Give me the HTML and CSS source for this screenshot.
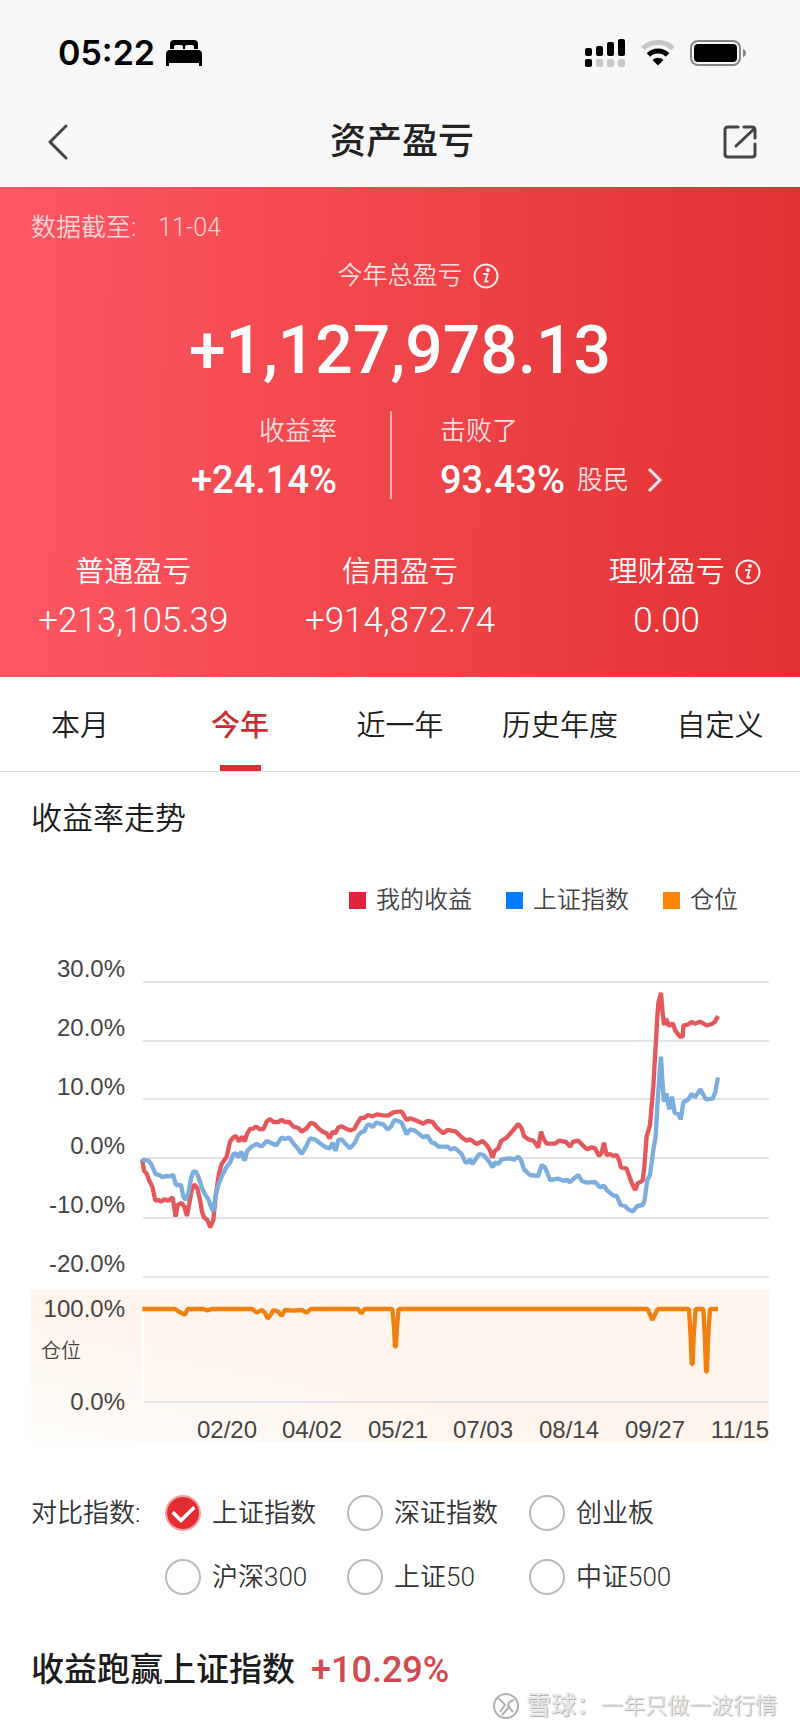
FILE: index.html
```html
<!DOCTYPE html>
<html lang="zh-CN">
<head>
    <meta charset="UTF-8">
    <meta name="viewport" content="width=device-width, initial-scale=1">
    <title>资产盈亏</title>
    <link rel="stylesheet" href="styles.css">
</head>
<body>
    <header class="top">
        <div class="status-bar">
            <div class="status-left">
                <span class="time">05:22</span>
                <svg width="36" height="26" viewBox="0 0 36 26">
                    <path d="M4 9V4q0-4 4-4h20q4 0 4 4v5h-4V7q0-2-2-2h-5q-2 0-2 2v2h-2V7q0-2-2-2h-5q-2 0-2 2v2z"/>
                    <path d="M0 26V14q0-4 4-4h28q4 0 4 4v12h-3v-3H3v3z"/>
                </svg>
            </div>
            <div class="status-right">
                <svg width="41" height="28" viewBox="0 0 41 28">
                    <rect x="0" y="9" width="7" height="8" rx="2"/>
                    <rect x="11" y="7" width="7" height="10" rx="2"/>
                    <rect x="22" y="3" width="7" height="14" rx="2"/>
                    <rect x="33" y="0" width="7" height="17" rx="2"/>
                    <rect x="0" y="20" width="7" height="8" rx="2"/>
                    <g fill="#c6c6c6">
                        <rect x="11" y="20" width="7" height="8" rx="2"/>
                        <rect x="22" y="20" width="7" height="8" rx="2"/>
                        <rect x="33" y="20" width="7" height="8" rx="2"/>
                    </g>
                </svg>
                <svg width="34" height="26" viewBox="0 0 34 26">
                    <path d="M2 8.500a21.500 21.500 0 0 1 30 0" fill="none" stroke="#c6c6c6" stroke-width="5"/>
                    <path d="M7.500 15a13.500 13.500 0 0 1 19 0" fill="none" stroke="#000" stroke-width="5"/>
                    <path d="M11.500 20a8 8 0 0 1 11 0L17 25.500z"/>
                </svg>
                <svg width="56" height="26" viewBox="0 0 56 26">
                    <rect x="1" y="1" width="49" height="24" rx="7" fill="none" stroke="#868686" stroke-width="2"/>
                    <rect x="4" y="4" width="43" height="18" rx="4"/>
                    <path d="M53 9q3 1 3 4t-3 4z" fill="#868686"/>
                </svg>
            </div>
        </div>
        <div class="nav">
            <button type="button" class="icon-btn" aria-label="返回">
                <svg width="22" height="36" viewBox="0 0 22 36"><path d="M19 2L3 18l16 16"/></svg>
            </button>
            <h1>资产盈亏</h1>
            <button type="button" class="icon-btn" aria-label="分享">
                <svg width="34" height="34" viewBox="0 0 34 34">
                    <path d="M15 2H5Q2 2 2 5v24q0 3 3 3h24q3 0 3-3V19M21 2h8q3 0 3 3v8M13 21L31 4"/>
                </svg>
            </button>
        </div>
    </header>

    <section class="hero">
        <div class="date"><span>数据截至:</span><span>11-04</span></div>
        <div class="total-label">
            今年总盈亏
            <svg class="info" viewBox="0 0 26 26">
                <circle cx="13" cy="13" r="11.500"/>
                <path d="M10 11h4.500l-2.200 7.500h3.200"/>
                <circle class="dot" cx="15" cy="7" r="2"/>
            </svg>
        </div>
        <div class="total">+1,127,978.13</div>
        <div class="metrics">
            <div class="metric rate">
                <span class="label">收益率</span>
                <strong>+24.14%</strong>
            </div>
            <a href="#" class="metric rank">
                <span class="label">击败了</span>
                <span class="rank-value">
                    <strong>93.43%</strong>
                    <span>股民</span>
                    <svg width="16" height="26" viewBox="0 0 16 26"><path d="M2 2l11 11L2 24"/></svg>
                </span>
            </a>
        </div>
        <div class="accounts">
            <div class="account"><span>普通盈亏</span><b>+213,105.39</b></div>
            <div class="account"><span>信用盈亏</span><b>+914,872.74</b></div>
            <div class="account">
                <span class="with-info">
                    理财盈亏
                    <svg class="info" viewBox="0 0 26 26">
                        <circle cx="13" cy="13" r="11.500"/>
                        <path d="M10 11h4.500l-2.200 7.500h3.200"/>
                        <circle class="dot" cx="15" cy="7" r="2"/>
                    </svg>
                </span>
                <b>0.00</b>
            </div>
        </div>
    </section>

    <nav class="tabs">
        <button type="button">本月</button>
        <button type="button" class="active">今年</button>
        <button type="button">近一年</button>
        <button type="button">历史年度</button>
        <button type="button">自定义</button>
    </nav>

    <main>
        <h2>收益率走势</h2>
        <ul class="legend">
            <li class="mine">我的收益</li>
            <li class="index">上证指数</li>
            <li class="position">仓位</li>
        </ul>

        <svg class="chart" viewBox="0 0 738 494" role="img" aria-label="收益率走势">
            <defs>
                <linearGradient id="band" x1="0" y1="1" x2="1" y2="0">
                    <stop offset="0" stop-color="#fffdfb"/>
                    <stop offset=".4" stop-color="#fff5ec"/>
                </linearGradient>
            </defs>
            <rect y="339" width="738" height="153" fill="url(#band)"/>
            <path class="grid" d="M112 32h626M112 91h626M112 149h626M112 208h626M112 268h626M112 327h626M112 452h626"/>
            <path d="M112 358v94" stroke="#fff" stroke-width="3"/>
            <g class="y-axis">
                <text x="94" y="27">30.0%</text>
                <text x="94" y="86">20.0%</text>
                <text x="94" y="145">10.0%</text>
                <text x="94" y="204">0.0%</text>
                <text x="94" y="263">-10.0%</text>
                <text x="94" y="322">-20.0%</text>
                <text x="94" y="367">100.0%</text>
                <text x="94" y="460">0.0%</text>
            </g>
            <text class="small" x="10" y="408">仓位</text>
            <g class="x-axis">
                <text x="196" y="488">02/20</text>
                <text x="281" y="488">04/02</text>
                <text x="367" y="488">05/21</text>
                <text x="452" y="488">07/03</text>
                <text x="538" y="488">08/14</text>
                <text x="624" y="488">09/27</text>
                <text x="709" y="488">11/15</text>
            </g>
            <!-- series points are in thirds of a unit -->
            <g class="series" transform="translate(-31 -90) scale(.33333)">
                <polyline stroke="#e4585c" points="427,900 432,932 440,941 448,962 457,980 466,1022 475,1020 484,1025 493,1018 505,1022 518,1012 527,1070 533,1035 545,1029 552,1038 561,1068 568,1030 575,990 583,973 592,985 600,1020 606,1055 612,1072 622,1080 631,1102 640,1080 648,1000 657,940 665,912 680,890 690,845 700,832 708,828 717,844 726,830 734,844 742,820 750,807 760,806 768,799 778,807 790,808 800,785 810,777 820,786 835,786 845,779 855,786 868,786 880,800 895,804 905,815 920,805 932,788 945,793 955,805 968,815 980,820 989,835 998,815 1006,820 1015,802 1025,799 1038,806 1050,811 1063,807 1072,790 1082,774 1092,774 1104,765 1118,769 1130,763 1150,766 1165,767 1180,757 1195,755 1205,755 1220,780 1230,775 1245,780 1270,791 1282,783 1298,786 1310,803 1330,820 1343,810 1368,815 1385,832 1400,842 1410,838 1430,852 1448,843 1460,855 1470,870 1477,893 1485,872 1495,865 1503,843 1520,833 1540,810 1555,792 1565,805 1572,828 1585,838 1600,842 1615,862 1623,815 1630,835 1640,851 1665,851 1677,842 1698,846 1710,860 1720,845 1735,842 1750,858 1762,868 1775,862 1785,865 1797,888 1805,878 1812,848 1820,886 1830,882 1840,888 1850,885 1857,900 1863,922 1880,926 1890,955 1900,980 1906,990 1913,970 1928,962 1933,920 1940,830 1950,795 1960,680 1972,470 1975,430 1983,398 1988,460 1992,495 1999,477 2007,498 2018,490 2026,512 2040,530 2048,530 2050,497 2065,493 2075,486 2085,491 2100,485 2120,496 2135,492 2145,485 2154,468"/>
                <polyline stroke="#7badde" points="427,895 430,900 445,902 455,915 467,943 478,945 487,952 497,948 512,949 519,944 528,975 543,975 550,1010 557,1020 565,1000 573,955 580,935 588,935 597,955 606,985 615,1003 625,1018 631,1035 640,1055 646,1010 655,975 667,945 680,920 690,908 700,882 708,880 714,892 724,875 734,902 742,872 755,860 770,852 785,860 800,843 815,850 828,856 838,843 845,832 855,837 868,833 880,850 893,865 905,882 918,860 930,835 945,838 960,850 978,862 990,865 998,848 1007,872 1015,840 1025,838 1035,850 1050,865 1065,848 1075,825 1085,815 1092,815 1102,795 1110,794 1118,802 1128,788 1150,793 1163,808 1173,800 1183,780 1195,783 1205,788 1220,823 1230,808 1245,812 1270,832 1282,827 1295,848 1305,850 1315,860 1343,860 1352,868 1365,864 1385,882 1395,905 1402,908 1410,898 1417,912 1430,893 1438,882 1450,885 1465,902 1478,922 1485,907 1495,912 1505,898 1530,895 1542,899 1555,890 1563,900 1572,928 1590,945 1615,948 1625,915 1635,922 1650,960 1675,956 1690,962 1702,960 1710,967 1720,957 1735,945 1745,962 1760,968 1785,966 1800,982 1812,977 1820,990 1840,1007 1850,1008 1862,1035 1875,1038 1885,1048 1898,1055 1912,1038 1928,1035 1933,1025 1942,960 1950,945 1960,870 1967,830 1972,740 1978,650 1983,590 1987,660 1992,725 1999,700 2008,748 2016,710 2024,758 2035,762 2042,778 2050,727 2065,718 2075,702 2085,712 2101,688 2118,718 2138,716 2146,695 2154,652"/>
            </g>
            <g class="series" transform="translate(-31 290) scale(.33333)">
                <polyline stroke="#f08010" points="427,207 525,207 540,217 555,224 563,207 610,207 622,211 635,207 757,207 770,218 785,210 795,218 803,236 812,225 820,210 835,215 845,228 855,210 880,212 905,210 920,218 932,207 1074,207 1084,220 1094,207 1177,207 1182,260 1185,320 1188,320 1191,260 1196,207 1943,207 1957,240 1973,207 2067,207 2072,290 2075,372 2078,372 2081,290 2087,207 2110,207 2115,300 2118,395 2121,395 2124,300 2130,207 2154,207"/>
            </g>
        </svg>

        <fieldset class="compare">
            <legend>对比指数:</legend>
            <div class="options">
                <label><input type="radio" name="index" checked>上证指数</label>
                <label><input type="radio" name="index">深证指数</label>
                <label><input type="radio" name="index">创业板</label>
                <label><input type="radio" name="index">沪深300</label>
                <label><input type="radio" name="index">上证50</label>
                <label><input type="radio" name="index">中证500</label>
            </div>
        </fieldset>

        <p class="summary">收益跑赢上证指数<span>+10.29%</span></p>
    </main>

    <footer class="watermark">
        <svg width="28" height="28" viewBox="0 0 28 28">
            <circle cx="14" cy="14" r="12"/>
            <path d="M6 6q5 4 7 7l-5 7M22 8q-6 1-6 6l5 6M10 23l8-9"/>
        </svg>
        <b>雪球：</b><span>一年只做一波行情</span>
    </footer>
</body>
</html>
```
FILE: styles.css
```css
* {
    box-sizing: border-box;
}

body {
    margin: 0;
    background: #fff;
    color: #1c1c1c;
    font-family: Roboto, "Noto Sans CJK SC", sans-serif;
}

button {
    border: 0;
    padding: 0;
    background: none;
    color: inherit;
    font: inherit;
}

svg {
    display: block;
    flex: none;
}

/* header */
.top {
    background: #f7f7f7;
    padding-bottom: 9px;
}

.status-bar {
    display: flex;
    justify-content: space-between;
    align-items: center;
    height: 106px;
    padding: 0 54px 0 58px;
}

.status-left,
.status-right {
    display: flex;
    align-items: center;
}

.status-left {
    gap: 11px;
}

.status-right {
    gap: 15px;
}

.time {
    font: 600 34px/40px Inter, sans-serif;
    color: #000;
}

.nav {
    display: flex;
    justify-content: space-between;
    align-items: center;
    height: 72px;
    padding: 0 43px 0 47px;
}

.nav h1 {
    margin: 0;
    font-size: 36px;
    line-height: 48px;
    font-weight: 500;
    color: #222;
}

.icon-btn {
    width: 34px;
}

.icon-btn path {
    fill: none;
    stroke: #444;
    stroke-width: 3;
    stroke-linecap: round;
    stroke-linejoin: round;
}

/* red panel */
.hero {
    padding: 26px 0 37px;
    background: linear-gradient(91deg, #ff5864, #f0464b 48%, #e13133);
    color: #fff;
}

.date {
    display: flex;
    gap: 22px;
    padding: 0 31px;
    font-size: 25px;
    line-height: 30px;
    font-weight: 350;
    color: #ffd3d6;
}

.total-label {
    display: flex;
    justify-content: center;
    align-items: center;
    gap: 10px;
    margin-top: 18px;
    font-size: 25px;
    line-height: 30px;
    font-weight: 350;
    color: #ffdcde;
}

.info {
    width: 26px;
    height: 26px;
    margin-right: -36px;
    fill: none;
    stroke: #ffe9ea;
    stroke-width: 2;
}

.info .dot {
    fill: #ffe9ea;
    stroke: none;
}

.total {
    margin: 20px 0;
    font-size: 66px;
    line-height: 80px;
    font-weight: 500;
    text-align: center;
}

.metrics {
    display: flex;
    height: 88px;
}

.metric {
    display: flex;
    flex-direction: column;
    gap: 15px;
    padding-top: 5px;
    color: inherit;
    text-decoration: none;
}

.metric .label {
    font-size: 26px;
    line-height: 30px;
    font-weight: 350;
    color: #ffdcde;
}

.metric strong {
    font-size: 38px;
    line-height: 38px;
    font-weight: 500;
}

.rate {
    width: 49%;
    align-items: flex-end;
    padding-right: 53px;
    border-right: 2px solid #f9b5b8;
}

.rank {
    flex: 1;
    padding-left: 48px;
}

.rank-value {
    display: flex;
    align-items: center;
    gap: 12px;
    font-size: 26px;
    line-height: 38px;
    font-weight: 350;
    color: #ffdcde;
}

.rank-value strong {
    color: #fff;
}

.rank-value svg {
    margin-left: 6px;
    fill: none;
    stroke: #ffe9ea;
    stroke-width: 3;
}

.accounts {
    display: grid;
    grid-template-columns: repeat(3, 1fr);
    margin-top: 58px;
}

.account {
    display: flex;
    flex-direction: column;
    align-items: center;
    gap: 15px;
    font-size: 29px;
    line-height: 30px;
    font-weight: 350;
}

.account b {
    font-size: 35px;
    line-height: 38px;
    font-weight: 350;
}

.with-info {
    display: flex;
    align-items: center;
    gap: 10px;
}

/* tabs */
.tabs {
    display: flex;
    border-bottom: 1px solid #dedede;
}

.tabs button {
    flex: 1 1 0;
    height: 94px;
    padding-top: 4px;
    font-size: 29px;
    line-height: 40px;
    font-weight: 350;
    white-space: nowrap;
}

.tabs .active {
    color: #cb2b31;
    font-weight: 500;
    background: linear-gradient(#dc3035, #dc3035) bottom / 41px 6px no-repeat;
}

/* trend */
main {
    padding: 24px 31px 0;
}

h2 {
    margin: 0;
    font-size: 31px;
    line-height: 46px;
    font-weight: 350;
}

.legend {
    display: flex;
    justify-content: flex-end;
    gap: 34px;
    margin: 43px 0 35px;
    padding: 0 31px 0 0;
    list-style: none;
    font-size: 24px;
    line-height: 30px;
    font-weight: 350;
    color: #444;
}

.legend li {
    display: flex;
    align-items: center;
    gap: 10px;
}

.legend li::before {
    content: "";
    width: 17px;
    height: 17px;
    background: #e0243d;
}

.legend .index::before {
    background: #057bff;
}

.legend .position::before {
    background: #ff8604;
}

.chart {
    width: 100%;
    font-family: "Liberation Sans", "Noto Sans CJK SC", sans-serif;
    font-size: 24px;
    fill: #444;
}

.chart .grid {
    stroke: #e3e3e5;
    stroke-width: 2;
}

.chart .y-axis {
    text-anchor: end;
}

.chart .x-axis {
    text-anchor: middle;
}

.chart .small {
    font-size: 20px;
    font-weight: 350;
}

.chart .series {
    fill: none;
    stroke-width: 13;
    stroke-linejoin: bevel;
}

/* index picker */
.compare {
    display: flex;
    margin: 51px 0 0;
    padding: 0;
    border: 0;
    font-size: 26px;
    line-height: 36px;
    font-weight: 350;
    color: #333;
}

.compare legend {
    float: left;
    width: 134px;
    padding: 0;
}

.options {
    display: grid;
    grid-template-columns: repeat(3, 182px);
    row-gap: 28px;
}

.options label {
    display: flex;
    align-items: center;
    gap: 11px;
    white-space: nowrap;
}

.options input {
    appearance: none;
    flex: none;
    width: 36px;
    height: 36px;
    margin: 0;
    border: 2px solid #bbb;
    border-radius: 50%;
}

.options input:checked {
    display: grid;
    place-items: center;
    border-color: #efa5a7;
    background: #e32e31;
}

.options input:checked::before {
    content: "";
    width: 17px;
    height: 10px;
    margin-bottom: 5px;
    border: solid #fff;
    border-width: 0 0 4px 4px;
    border-radius: 1px;
    transform: rotate(-45deg);
}

.summary {
    display: flex;
    gap: 16px;
    margin: 51px 0 0;
    font-size: 33px;
    line-height: 48px;
    font-weight: 500;
}

.summary span {
    font-size: 36px;
    color: #d3494f;
}

.watermark {
    display: flex;
    justify-content: flex-end;
    align-items: center;
    height: 37px;
    padding: 0 23px 13px 0;
    font-size: 22px;
    line-height: 24px;
    font-weight: 350;
    color: #e6e6e6;
    text-shadow: 1px 1px 1px #aaa;
}

.watermark b {
    font-size: 25px;
    font-weight: 500;
    margin-left: 6px;
}

.watermark svg {
    fill: none;
    stroke: #b0b0b0;
    stroke-width: 2;
}
```
